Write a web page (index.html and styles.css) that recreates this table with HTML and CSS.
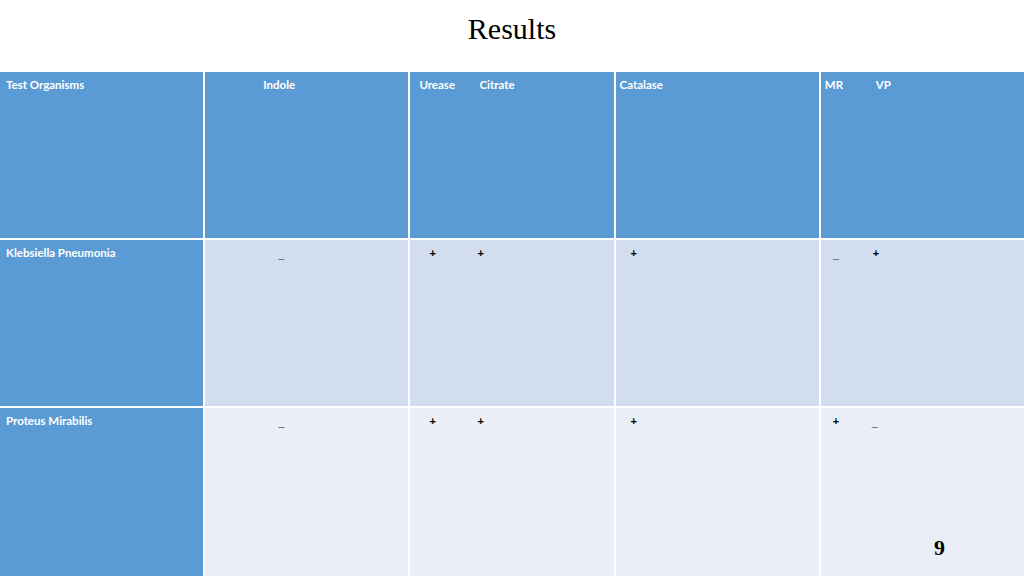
FILE: index.html
```html
<!DOCTYPE html>
<html>
<head>
<meta charset="utf-8">
<link rel="stylesheet" href="styles.css">
</head>
<body>
<div class="slide">
  <h1 class="title">Results</h1>
  <div class="table">
    <div class="cell head pl6"><span>Test Organisms</span></div>
    <div class="cell head pl58"><span>Indole</span></div>
    <div class="cell head pl9"><span class="w60">Urease</span><span>Citrate</span></div>
    <div class="cell head pl4"><span>Catalase</span></div>
    <div class="cell head pl4"><span class="w51">MR</span><span>VP</span></div>

    <div class="cell head pl6"><span>Klebsiella Pneumonia</span></div>
    <div class="cell r2 pl73"><span class="neg">_</span></div>
    <div class="cell r2 pl19"><span class="pos w48">+</span><span class="pos">+</span></div>
    <div class="cell r2 pl15"><span class="pos">+</span></div>
    <div class="cell r2 pl12"><span class="neg w40">_</span><span class="pos">+</span></div>

    <div class="cell head pl6"><span>Proteus Mirabilis</span></div>
    <div class="cell r3 pl73"><span class="neg">_</span></div>
    <div class="cell r3 pl19"><span class="pos w48">+</span><span class="pos">+</span></div>
    <div class="cell r3 pl15"><span class="pos">+</span></div>
    <div class="cell r3 pl12"><span class="pos w39">+</span><span class="neg">_</span></div>
  </div>
  <div class="page-num">9</div>
</div>
</body>
</html>
```

FILE: styles.css
```css
html, body {
  margin: 0;
  padding: 0;
  background: #ffffff;
}

.slide {
  position: relative;
  width: 1024px;
  height: 576px;
  overflow: hidden;
  display: flex;
  flex-direction: column;
}

.title {
  margin: 0;
  height: 72px;
  box-sizing: border-box;
  padding-top: 11px;
  text-align: center;
  font-family: "Liberation Serif", "Times New Roman", serif;
  font-weight: normal;
  font-size: 30px;
  line-height: 36px;
  color: #000000;
}

.table {
  display: grid;
  grid-template-columns: repeat(5, 1fr);
  grid-template-rows: 166px 166px 168px;
  column-gap: 2px;
  row-gap: 2px;
  background: #ffffff;
}

.cell {
  display: flex;
  align-items: flex-start;
  box-sizing: border-box;
  padding-top: 6px;
  font-family: Lato, "Liberation Sans", sans-serif;
  font-size: 11.5px;
  line-height: 14px;
  white-space: nowrap;
}

.head {
  background: #5b9bd5;
  color: #ffffff;
  font-weight: bold;
}

.r2 { background: #d2deef; }
.r3 { background: #eaeff7; }

.pos {
  color: #000000;
  font-family: "Liberation Sans", sans-serif;
  font-weight: bold;
  font-size: 11px;
  line-height: 14px;
}

.neg {
  color: #5a5a5a;
  font-family: "Liberation Sans", sans-serif;
  font-weight: bold;
  font-size: 11px;
  line-height: 14px;
  transform: scaleY(1.6) translateY(-1px);
}

.pl4 { padding-left: 4px; }
.pl6 { padding-left: 6px; }
.pl9 { padding-left: 9px; }
.pl12 { padding-left: 12px; }
.pl15 { padding-left: 15px; }
.pl19 { padding-left: 19px; }
.pl58 { padding-left: 58px; }
.pl73 { padding-left: 73px; }

.w60 { width: 60px; flex: none; }
.w51 { width: 51px; flex: none; }
.w48 { width: 48px; flex: none; }
.w40 { width: 40px; flex: none; }
.w39 { width: 39px; flex: none; }

.page-num {
  position: absolute;
  left: 934px;
  top: 534px;
  font-family: "Liberation Serif", "Times New Roman", serif;
  font-weight: bold;
  font-size: 22px;
  line-height: 28px;
  color: #000000;
}
```
